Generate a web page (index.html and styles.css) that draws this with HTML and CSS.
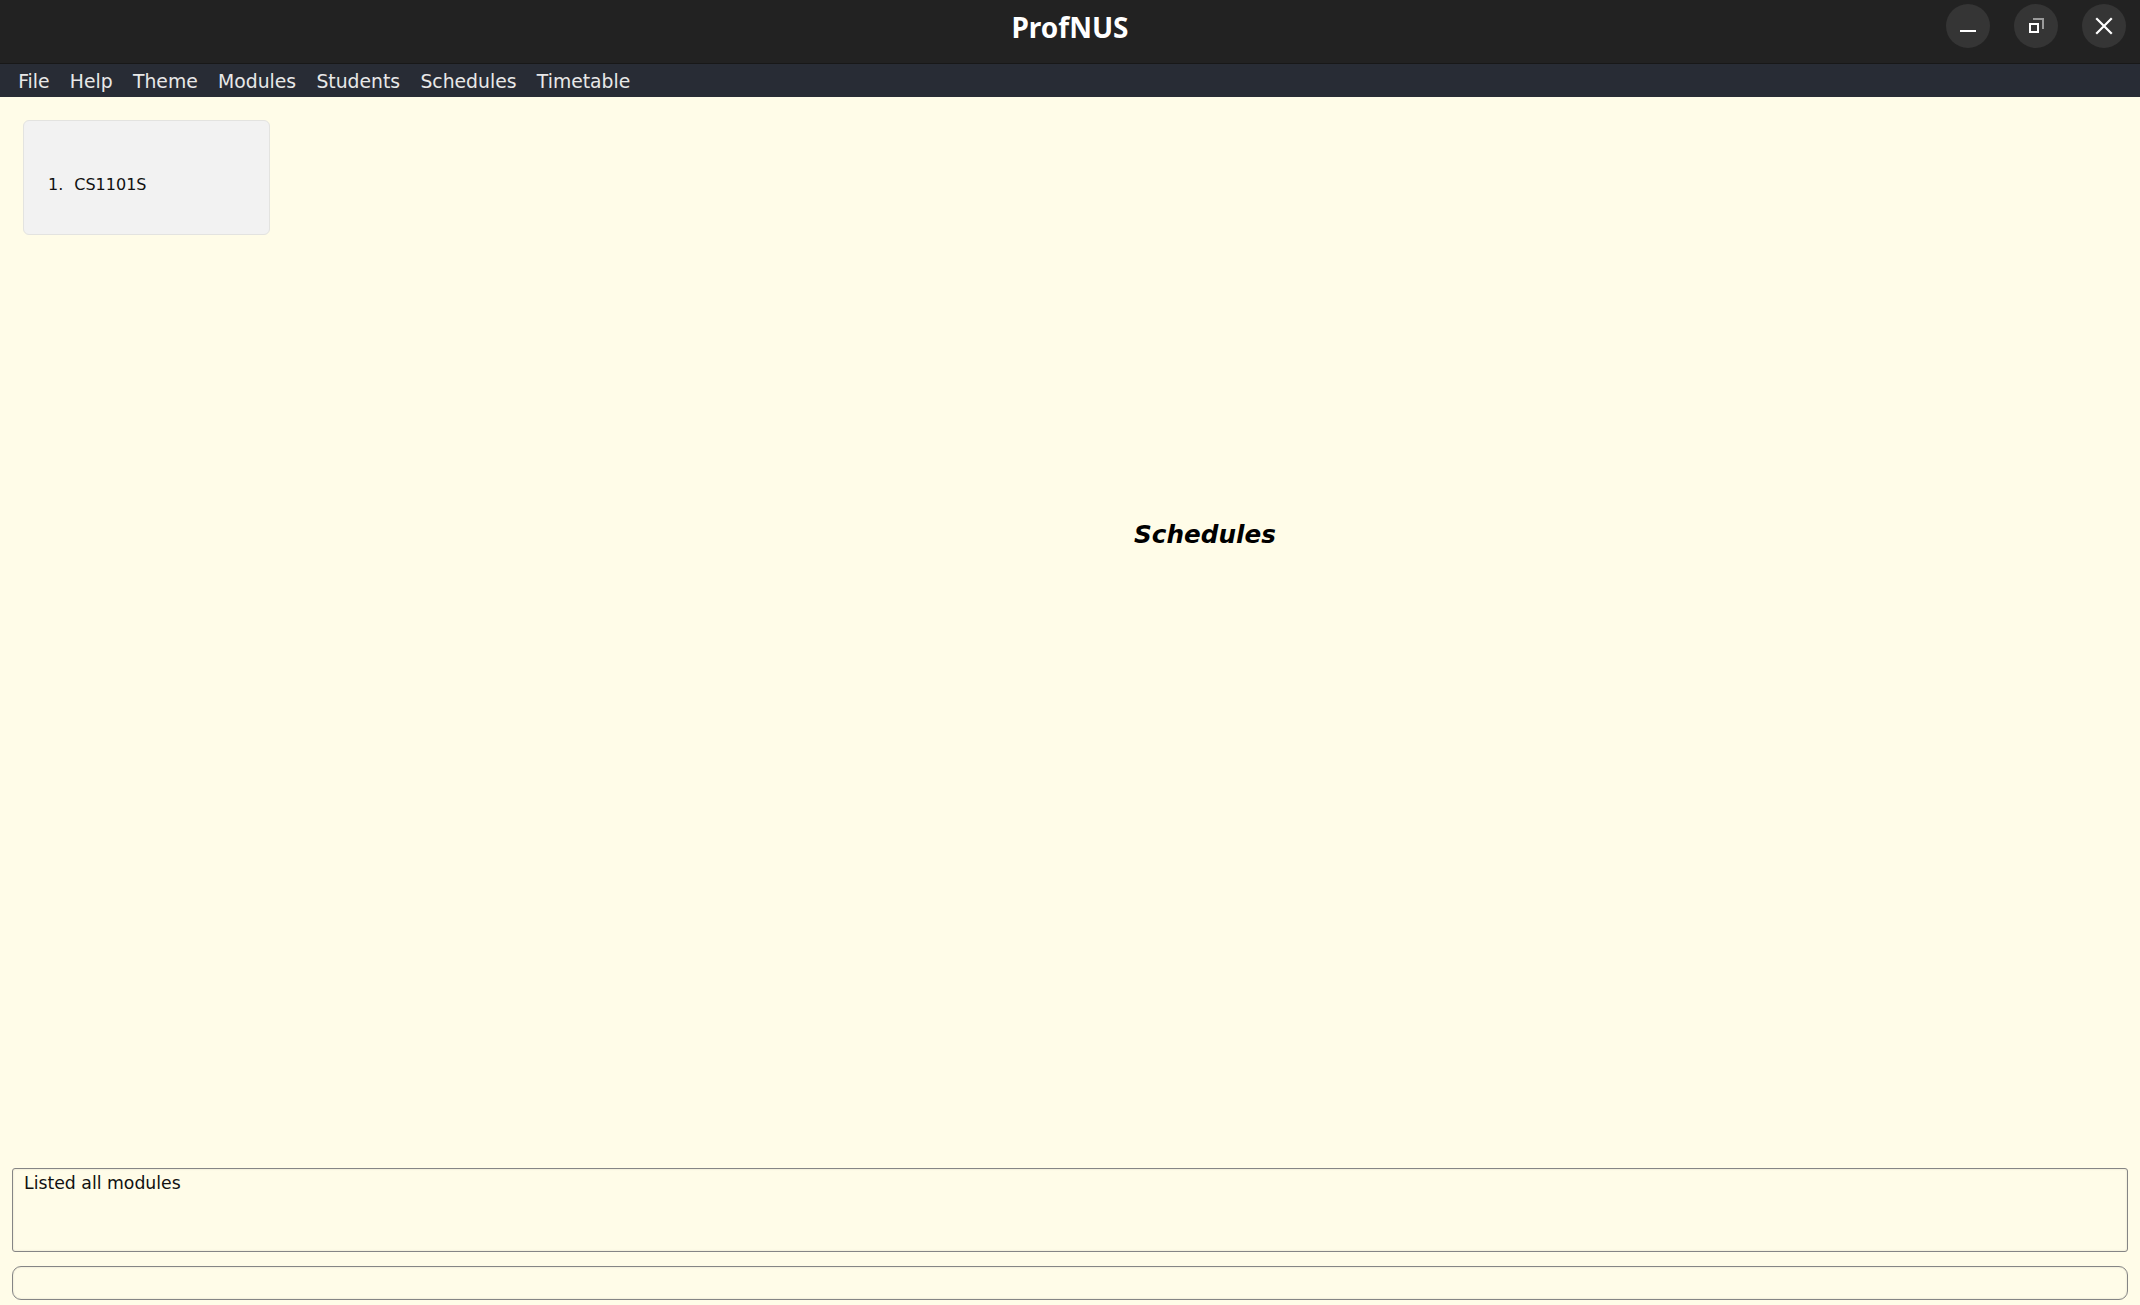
FILE: index.html
```
<!DOCTYPE html>
<html>
<head>
<meta charset="utf-8">
<title>ProfNUS</title>
<link rel="stylesheet" href="styles.css">
</head>
<body>
<div class="window">
  <header class="titlebar">
    <div class="tb-side"></div>
    <div class="tb-title">ProfNUS</div>
    <div class="tb-side tb-buttons">
      <div class="tb-btn">
        <svg width="44" height="44" viewBox="0 0 44 44"><rect x="14" y="26" width="16" height="2" fill="#ffffff"/></svg>
      </div>
      <div class="tb-btn">
        <svg width="44" height="44" viewBox="0 0 44 44">
          <path d="M19 15 H29 V25" fill="none" stroke="#9a9a9a" stroke-width="2"/>
          <rect x="16" y="20" width="8" height="8" fill="none" stroke="#ffffff" stroke-width="2"/>
        </svg>
      </div>
      <div class="tb-btn">
        <svg width="44" height="44" viewBox="0 0 44 44"><path d="M15 15 L29 29 M29 15 L15 29" stroke="#ffffff" stroke-width="2.2" stroke-linecap="square"/></svg>
      </div>
    </div>
  </header>
  <nav class="menubar">
    <span class="menu-item">File</span>
    <span class="menu-item">Help</span>
    <span class="menu-item">Theme</span>
    <span class="menu-item">Modules</span>
    <span class="menu-item">Students</span>
    <span class="menu-item">Schedules</span>
    <span class="menu-item">Timetable</span>
  </nav>
  <main class="content">
    <section class="module-list">
      <div class="module-card"><span class="idx">1.</span><span>CS1101S</span></div>
    </section>
    <section class="schedule-pane">
      <div class="schedule-title">Schedules</div>
    </section>
  </main>
  <div class="result-box">Listed all modules</div>
  <div class="command-box"></div>
  <div class="bottom-strip"></div>
</div>
</body>
</html>
```

FILE: styles.css
```
html, body {
  margin: 0;
  padding: 0;
}
body {
  background: #fffce8;
  font-family: "DejaVu Sans", sans-serif;
}
.window {
  width: 2140px;
  height: 1305px;
  display: flex;
  flex-direction: column;
  background: #fffce8;
  overflow: hidden;
}
.titlebar {
  height: 63px;
  flex: none;
  background: #222222;
  border-bottom: 1px solid #181818;
  display: grid;
  grid-template-columns: 1fr auto 1fr;
  align-items: start;
}
.tb-title {
  color: #ffffff;
  font-family: "Noto Sans", "Open Sans", sans-serif;
  font-weight: 700;
  font-size: 28px;
  line-height: 54px;
}
.tb-buttons {
  display: flex;
  justify-content: flex-end;
  gap: 24px;
  padding-right: 14px;
  padding-top: 4px;
}
.tb-btn {
  width: 44px;
  height: 44px;
  border-radius: 50%;
  background: #353535;
}
.tb-btn svg {
  display: block;
}
.menubar {
  height: 33px;
  flex: none;
  background: #282c35;
  display: flex;
  align-items: center;
  padding-left: 8px;
}
.menu-item {
  color: #e8e8e8;
  font-size: 18.8px;
  padding: 0 10.15px;
  line-height: 33px;
  padding-top: 2px;
}
.content {
  flex: none;
  height: 1071px;
  display: flex;
}
.module-list {
  width: 247px;
  padding: 23px 0 0 23px;
  flex: none;
}
.module-card {
  height: 115px;
  box-sizing: border-box;
  background: #f2f2f2;
  border: 1px solid #e3e3e0;
  border-radius: 6px;
  display: flex;
  align-items: center;
  padding-left: 24px;
  padding-top: 14px;
  font-size: 16px;
  color: #111111;
}
.module-card .idx {
  margin-right: 11px;
}
.schedule-pane {
  flex: 1;
  height: 874px;
  display: flex;
  align-items: center;
  justify-content: center;
}
.schedule-title {
  font-size: 24.7px;
  font-weight: 700;
  font-style: italic;
  color: #000000;
}
.result-box {
  flex: none;
  margin: 0 12px;
  height: 84px;
  box-sizing: border-box;
  border: 1.5px solid #858585;
  border-radius: 3px;
  box-shadow: inset 0 0 2px rgba(0,0,0,0.15);
  padding: 4px 11px;
  font-size: 17.3px;
  color: #111111;
}
.command-box {
  flex: none;
  margin: 14px 12px 0 12px;
  height: 34px;
  box-sizing: border-box;
  border: 1.5px solid #858585;
  border-radius: 9px;
  box-shadow: inset 0 0 2px rgba(0,0,0,0.15);
}
.bottom-strip {
  flex: 1;
  margin-top: 5px;
  background: #f4f2e2;
}
```
